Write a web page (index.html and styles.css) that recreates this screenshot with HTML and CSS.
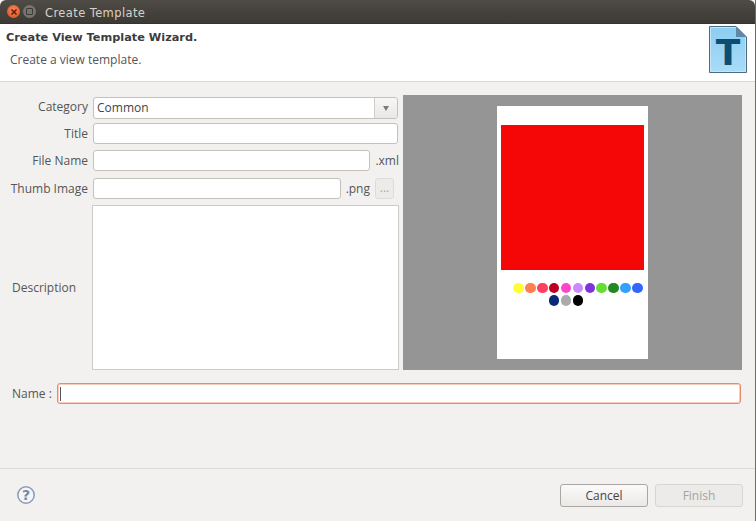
FILE: index.html
```html
<!DOCTYPE html>
<html lang="en">
<head>
<meta charset="utf-8">
<title>Create Template</title>
<link rel="stylesheet" href="styles.css">
</head>
<body>
<div class="window">
  <header class="titlebar">
    <span class="win-btn close"><svg viewBox="0 0 8 8" width="8" height="8"><path d="M1.5 1.5l5 5M6.5 1.5l-5 5" stroke="#5a1a08" stroke-width="1.5"/></svg></span>
    <span class="win-btn max"><span class="max-glyph"></span></span>
    <span class="window-title">Create Template</span>
  </header>
  <section class="banner">
    <div class="banner-text">
      <h1 class="banner-title">Create View Template Wizard.</h1>
      <p class="banner-sub">Create a view template.</p>
    </div>
    <svg class="banner-icon" width="38" height="52" viewBox="0 0 38 52">
      <defs>
        <linearGradient id="doc" x1="0" y1="0" x2="0" y2="1">
          <stop offset="0" stop-color="#8ccdf3"/>
          <stop offset="1" stop-color="#a9dcf6"/>
        </linearGradient>
      </defs>
      <path d="M.5.5H27L37.5 11V46.5H.5Z" fill="url(#doc)" stroke="#4d6b80"/>
      <path d="M1.5 1.5H26.5L36.5 11.5V45.5H1.5Z" fill="none" stroke="#c4e6f8"/>
      <path d="M27 .5V11H37.5Z" fill="#5f87a6"/>
      <text class="icon-t" x="19" y="39" text-anchor="middle">T</text>
    </svg>
  </section>
  <main class="content">
    <div class="columns">
      <form class="fields">
        <div class="row row-category">
          <label class="label label-up">Category</label>
          <div class="combo"><span class="combo-value">Common</span><span class="combo-arrow"></span></div>
        </div>
        <div class="row row-title">
          <label class="label">Title</label>
          <input class="input grow" type="text">
        </div>
        <div class="row row-file">
          <label class="label">File Name</label>
          <input class="input grow" type="text">
          <span class="suffix">.xml</span>
        </div>
        <div class="row row-thumb">
          <label class="label">Thumb Image</label>
          <input class="input grow" type="text">
          <span class="suffix">.png</span>
          <button class="browse" type="button">...</button>
        </div>
        <div class="row row-desc">
          <label class="label label-desc">Description</label>
          <textarea class="textarea"></textarea>
        </div>
      </form>
      <div class="preview">
        <div class="page">
          <div class="swatch"></div>
          <div class="dots">
            <i class="dot" style="background:#ffffff"></i>
            <i class="dot" style="background:#ffff33"></i>
            <i class="dot" style="background:#ff7f50"></i>
            <i class="dot" style="background:#ff3f5f"></i>
            <i class="dot" style="background:#bb0022"></i>
            <i class="dot" style="background:#ff44cc"></i>
            <i class="dot" style="background:#cc88ff"></i>
            <i class="dot" style="background:#7f33dd"></i>
            <i class="dot" style="background:#66dd33"></i>
            <i class="dot" style="background:#228822"></i>
            <i class="dot" style="background:#33a0ff"></i>
            <i class="dot" style="background:#3366ff"></i>
            <i class="dot" style="background:#0a2a77"></i>
            <i class="dot" style="background:#aaaaaa"></i>
            <i class="dot" style="background:#000000"></i>
            <i class="dot" style="background:#ffffff"></i>
          </div>
        </div>
      </div>
    </div>
    <div class="name-row">
      <label class="name-label">Name :</label>
      <div class="name-input"><span class="caret"></span></div>
    </div>
  </main>
  <footer class="footer">
    <svg class="help" width="20" height="20" viewBox="0 0 20 20">
      <circle cx="10" cy="10" r="8.2" fill="#f4f5f7" stroke="#8a9cb8" stroke-width="1.5"/>
      <text class="help-q" x="10" y="15" text-anchor="middle">?</text>
    </svg>
    <div class="actions">
      <button class="btn" type="button">Cancel</button>
      <button class="btn btn-disabled" type="button" disabled>Finish</button>
    </div>
  </footer>
</div>
</body>
</html>
```
FILE: styles.css
```css
* { box-sizing: border-box; }
html, body { margin: 0; padding: 0; background: #f2f1f0; }
body { font-family: "Open Sans", "Noto Sans", sans-serif; font-size: 12px; color: #4c4c4c; overflow: hidden; }
.window { width: 756px; height: 521px; display: flex; flex-direction: column; border-right: 1px solid #6e6c68; background: #f2f1f0; }

.titlebar { height: 24px; flex: none; display: flex; align-items: center; padding-left: 7px; border-radius: 6px 6px 0 0; background: linear-gradient(#4f4b45, #3c3a35); border-bottom: 1px solid #35332f; }
.win-btn { width: 13px; height: 13px; border-radius: 50%; display: flex; align-items: center; justify-content: center; }
.close { background: radial-gradient(circle at 50% 40%, #f58a5c, #dd4a1c); }
.max { margin-left: 3px; background: #77746e; }
.max-glyph { width: 7px; height: 7px; border: 1px solid #3c3a35; border-radius: 1px; }
.window-title { margin-left: 9px; padding-top: 2px; font-family: "DejaVu Sans", sans-serif; font-size: 11.5px; font-weight: 500; letter-spacing: .4px; color: #d6d2c9; }

.banner { height: 58px; flex: none; display: flex; justify-content: space-between; background: #fff; border-bottom: 1px solid #dcdad8; padding: 2px 8px 0 6px; }
.banner-title { margin: 5px 0 0; font-family: "DejaVu Sans", sans-serif; font-size: 11.3px; font-weight: 700; color: #3c3c3c; line-height: 14px; }
.banner-sub { margin: 7px 0 0 4px; font-size: 12px; line-height: 15px; color: #555; }
.banner-icon { display: block; }
.icon-t { font-family: "DejaVu Sans", sans-serif; font-weight: 700; font-size: 36px; fill: #0b4e72; }

.content { flex: none; height: 386px; padding-top: 13px; display: flex; flex-direction: column; }
.columns { display: flex; height: 276px; }
.fields { width: 403px; display: flex; flex-direction: column; padding-right: 4px; }
.row { display: flex; align-items: center; }
.row-category { margin-top: 2px; height: 22px; padding-right: 1px; }
.row-title { margin-top: 4px; height: 21px; padding-right: 1px; }
.row-file { margin-top: 6px; height: 21px; }
.row-thumb { margin-top: 7px; height: 21px; }
.row-desc { margin-top: 6px; height: 165px; }
.label { width: 93px; flex: none; padding-right: 5px; text-align: right; font-size: 12px; color: #555; }
.label-up { padding-bottom: 4px; }
.label-desc { width: 92px; text-align: left; padding-left: 12px; padding-right: 0; }

.combo { flex: 1; height: 22px; display: flex; background: #fff; border: 1px solid #c4c0bb; border-radius: 3px; }
.combo-value { flex: 1; padding-left: 3px; font-size: 12px; line-height: 20px; color: #444; }
.combo-arrow { width: 23px; border-left: 1px solid #d0cdc8; background: linear-gradient(#f8f7f6, #e9e7e5); display: flex; align-items: center; justify-content: center; border-radius: 0 3px 3px 0; }
.combo-arrow::after { content: ""; border-left: 3.5px solid transparent; border-right: 3.5px solid transparent; border-top: 5px solid #7a7a7a; }

.input { min-width: 0; height: 21px; margin: 0; padding: 0 3px; background: #fff; border: 1px solid #c4c0bb; border-radius: 3px; outline: none; }
.grow { flex: 1; }
.suffix { flex: none; margin-left: 5px; font-size: 12px; color: #555; }
.browse { flex: none; width: 19px; height: 21px; margin: 0 5px 0 5px; padding: 0 0 4px; font: 12px "Open Sans", sans-serif; color: #a9a7a4; background: #ecebe9; border: 1px solid #dedcda; border-radius: 3px; }
.textarea { flex: 1; height: 165px; margin: 0; background: #fff; border: 1px solid #cfccc8; resize: none; outline: none; }

.preview { width: 339px; height: 275px; flex: none; display: flex; justify-content: center; padding-top: 11px; background: #959595; }
.page { width: 151px; height: 253px; background: #fff; display: flex; flex-direction: column; align-items: center; padding-top: 19px; }
.swatch { width: 143px; height: 144.5px; background: #f50707; }
.dots { width: 144px; margin: 12.5px 1px 0 0; display: flex; flex-wrap: wrap; justify-content: center; row-gap: .5px; }
.dot { width: 10.5px; height: 10.5px; margin: .7px; border-radius: 50%; }

.name-row { margin-top: 12px; display: flex; align-items: center; padding-left: 12px; padding-right: 14px; }
.name-label { width: 45px; flex: none; font-size: 12px; color: #555; }
.name-input { flex: 1; height: 21px; padding: 3px 2px; background: #fff; border: 1px solid #e98a68; box-shadow: inset 0 0 0 1px #f8cdbb; border-radius: 3px; }
.caret { display: block; width: 1px; height: 14px; background: #555; }

.footer { flex: none; height: 53px; display: flex; align-items: flex-start; justify-content: space-between; padding: 15px 12px 0 16px; border-top: 1px solid #dcdad8; }
.help { margin-top: 1px; }
.help-q { font-family: "DejaVu Sans", sans-serif; font-weight: 700; font-size: 14px; fill: #7689a8; }
.actions { display: flex; gap: 7px; }
.btn { width: 88px; height: 23px; padding: 0; font: 12px "Open Sans", sans-serif; color: #444; background: linear-gradient(#fbfafa, #ebe9e7); border: 1px solid #aaa7a2; border-radius: 3px; }
.btn-disabled { color: #a5a3a0; background: #ecebe9; border-color: #d8d6d3; }
```
